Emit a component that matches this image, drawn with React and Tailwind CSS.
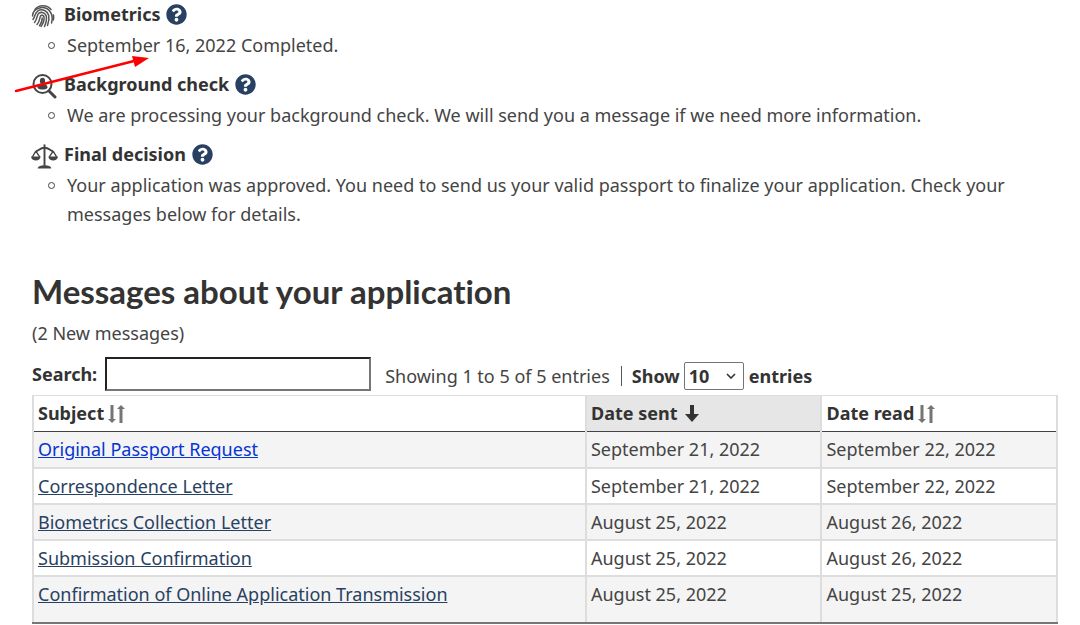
import React, { useState } from "react";
import { FaQuestionCircle } from "react-icons/fa";

const messages = [
  { subject: "Original Passport Request", sent: "September 21, 2022", read: "September 22, 2022", isNew: true },
  { subject: "Correspondence Letter", sent: "September 21, 2022", read: "September 22, 2022" },
  { subject: "Biometrics Collection Letter", sent: "August 25, 2022", read: "August 26, 2022" },
  { subject: "Submission Confirmation", sent: "August 25, 2022", read: "August 26, 2022" },
  { subject: "Confirmation of Online Application Transmission", sent: "August 25, 2022", read: "August 25, 2022" },
];

function FingerprintIcon() {
  return (
    <svg viewBox="0 0 24 24" className="h-6 w-6" fill="none" stroke="#555" strokeWidth="1.5" strokeLinecap="round">
      <path d="M4 5.500C8 .5 16 .5 20 5.500" />
      <path d="M1.500 12C2 3 14 1 19 7.500c3 4 2.500 8 1.500 11.500" />
      <path d="M2 15.500C4.500 12 3.500 9 7 6.800c4.500-2.500 9.500.2 10.700 4.700.7 3.500 0 7-1.200 10" />
      <path d="M3.500 18.500C7 14 5.500 11 8 9.200c3-2 6.500 0 7.300 3 .7 3.500-.3 7-1.800 10.300" />
      <path d="M6 20.500c3-3.500 2.500-6.500 3.500-8.500 1-1.500 3-.8 3.500 1 .5 3-.8 6.500-3 9.500" />
      <path d="M11.200 14c.2 2.500-.8 5-2.700 7.800" />
      <path d="M22.500 11c.3 2 .2 3.500-.2 5" />
    </svg>
  );
}

function BackgroundIcon() {
  return (
    <svg viewBox="0 0 26 26" className="h-[26px] w-[26px]" fill="none" stroke="#444">
      <circle cx="11.5" cy="11" r="9" strokeWidth="2" />
      <path d="M18 18l6 6" strokeWidth="3" strokeLinecap="round" />
      <ellipse cx="11.5" cy="8" rx="2.6" ry="3.2" fill="#444" stroke="none" />
      <path d="M6.500 15c0-3 2-3.600 3.500-4h3c1.500.4 3.500 1 3.500 4-2.500 2-7.500 2-10 0z" fill="#444" stroke="none" />
    </svg>
  );
}

function ScalesIcon() {
  return (
    <svg viewBox="0 0 28 26" className="h-[26px] w-[27px]" fill="none" stroke="#444" strokeWidth="1.400">
      <path d="M14 1v22" strokeWidth="2" />
      <path d="M5 8C8 8 9 4.500 14 4.500S20 8 23 8" strokeWidth="2" />
      <path d="M5 8L1.500 14M5 8L9 14M23 8L19 14M23 8l3.500 6" />
      <path d="M0 13.500h10c-.3 5.500-9.700 5.500-10 0zM18 13.500h10c-.3 5.500-9.700 5.500-10 0z" fill="#444" stroke="none" />
      <path d="M7 26c0-2.500 3.500-3.500 7-3.500s7 1 7 3.500z" fill="#444" stroke="none" />
    </svg>
  );
}

function SortBoth() {
  return (
    <svg viewBox="0 0 17 18" className="h-[18px] w-[17px]" fill="#757575">
      <path d="M2.500 0h3v14H8l-4 4-4-4h2.500z" />
      <path d="M11.500 18h3V4H17l-4-4-4 4h2.500z" />
    </svg>
  );
}

function SortDown() {
  return (
    <svg viewBox="0 0 14 18" className="h-[18px] w-[14px]" fill="#333">
      <path d="M5 0h4v9h5l-7 8-7-8h5z" />
    </svg>
  );
}

function Step({ icon, title, children }) {
  return (
    <li>
      <div className="flex h-7 items-center">
        <span className="-ml-px flex w-[33px] shrink-0 justify-start pt-1">{icon}</span>
        <h3 className="font-bold text-[#333]">{title}</h3>
        <button aria-label={`Help: ${title}`} className="ml-[6px] cursor-pointer text-[21px] text-[#284162]">
          <FaQuestionCircle />
        </button>
      </div>
      <ul className="mt-[3px] ml-4">
        <li className="flex leading-[29px]">
          <span className="mt-[11px] mr-3 h-[7px] w-[7px] shrink-0 rounded-full border border-[#444]" />
          <span>{children}</span>
        </li>
      </ul>
    </li>
  );
}

export default function App() {
  const [search, setSearch] = useState("");
  const [count, setCount] = useState("10");

  const head = "border-x-2 border-t border-b border-x-[#ddd] border-t-[#ddd] border-b-[#444] px-1";
  const cell = "border-x-2 border-[#ddd] px-1 pt-[2px] align-top leading-[30px]";

  return (
    <div className="relative bg-white pr-[22px] pl-8 font-['Noto_Sans',sans-serif] text-[18px] text-[#444]">
      <ul className="flex flex-col gap-[10px]">
        <Step title="Biometrics" icon={<FingerprintIcon />}>
          September 16, 2022 Completed.
        </Step>
        <Step title="Background check" icon={<BackgroundIcon />}>
          We are processing your background check. We will send you a message if we need more information.
        </Step>
        <Step title="Final decision" icon={<ScalesIcon />}>
          Your application was approved. You need to send us your valid passport to finalize your application. Check your
          messages below for details.
        </Step>
      </ul>

      {/* Pointer to the biometrics date */}
      <svg className="pointer-events-none absolute top-[50px] left-2" width="150" height="50" fill="#f00">
        <path d="M8 41L126 11" stroke="#f00" strokeWidth="2.500" strokeLinecap="round" />
        <path d="M124 6l17 2-14 9z" />
      </svg>

      {/* Messages */}
      <h2 className="mt-10 font-[Lato,sans-serif] text-[33px] leading-[44px] font-bold text-[#333] [font-variant-ligatures:none]">
        Messages about your application
      </h2>
      <p className="mt-1 leading-[32px]">(2 New messages)</p>

      <div className="mt-2 flex items-center">
        <label htmlFor="search" className="font-bold text-[#333]">Search:</label>
        <input
          id="search"
          type="text"
          value={search}
          onChange={(e) => setSearch(e.target.value)}
          className="ml-2 h-[34px] w-[266px] border-2 border-t-[#222] border-r-[#767676] border-b-[#767676] border-l-[#222] px-2"
        />
        <span className="ml-[14px] pt-1">Showing 1 to 5 of 5 entries</span>
        <span className="mt-1 ml-[11px] h-5 w-px bg-[#555]" />
        <label className="ml-[10px] flex items-center pt-1 font-bold text-[#333]">
          Show
          <span className="relative mr-[5px] ml-1 flex items-center">
            <select
              value={count}
              onChange={(e) => setCount(e.target.value)}
              className="h-7 w-[60px] appearance-none rounded-xs border border-[#767676] bg-white pl-1 leading-[24px] font-bold"
            >
              <option>10</option>
              <option>25</option>
              <option>50</option>
            </select>
            <svg viewBox="0 0 10 6" className="pointer-events-none absolute right-2 h-[6px] w-[10px]" fill="none" stroke="#333" strokeWidth="1.600">
              <path d="M1 1l4 4 4-4" />
            </svg>
          </span>
          entries
        </label>
      </div>

      <table className="mt-1 w-full table-fixed border-collapse">
        <thead>
          <tr className="h-9 text-left text-[#333]">
            <th className={`${head} w-[54%]`}>
              <button className="flex items-center gap-1 font-bold">Subject <SortBoth /></button>
            </th>
            <th className={`${head} w-[23%] bg-[#e6e6e6]`}>
              <button className="flex items-center gap-2 font-bold">Date sent <SortDown /></button>
            </th>
            <th className={`${head} w-[23%]`}>
              <button className="flex items-center gap-1 font-bold">Date read <SortBoth /></button>
            </th>
          </tr>
        </thead>
        <tbody className="[&>tr:last-child>td]:border-b-[#777] [&>tr>td]:border-b-2">
          {messages.map((m) => (
            <tr key={m.subject} className="h-9 odd:bg-[#f4f4f4] last:h-[47px]">
              <td className={cell}>
                <a href="#" className={m.isNew ? "text-[#0535d2] underline" : "text-[#284162] underline"}>{m.subject}</a>
              </td>
              <td className={cell}>{m.sent}</td>
              <td className={cell}>{m.read}</td>
            </tr>
          ))}
        </tbody>
      </table>
    </div>
  );
}
